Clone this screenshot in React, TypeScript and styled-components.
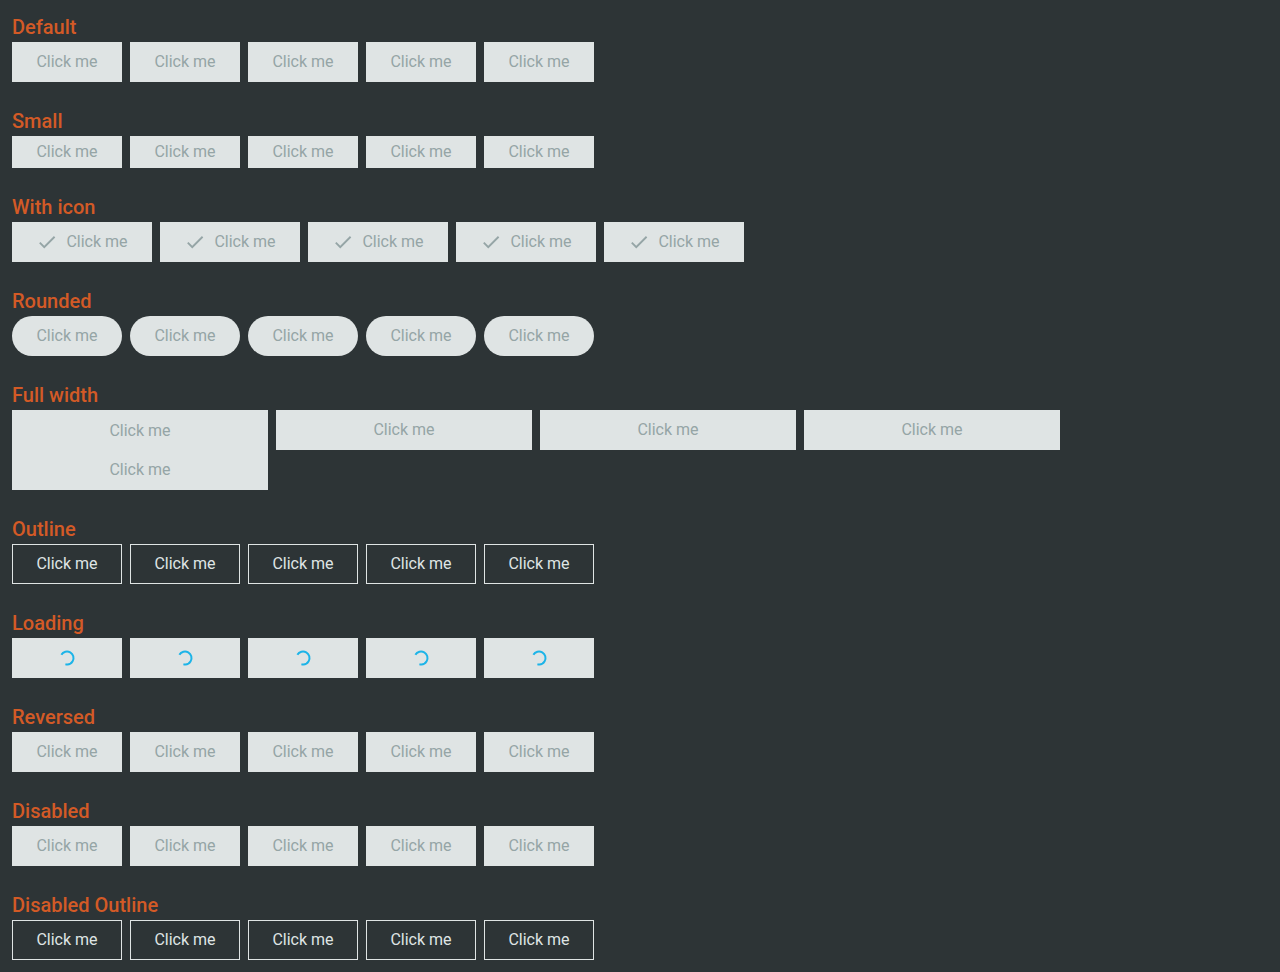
import React from "react";
import styled, { createGlobalStyle, css } from "styled-components";

const Global = createGlobalStyle`
  html, body { margin: 0; padding: 0; background: #2d3436; }
  body { font-family: Roboto, "Liberation Sans", sans-serif; }
`;

const Page = styled.div`
  padding: 15px 12px 12px;
  display: flex;
  flex-direction: column;
  gap: 27px;
`;

const Section = styled.section`
  display: flex;
  flex-direction: column;
  gap: 3px;
`;

const Heading = styled.h3`
  margin: 0;
  font-size: 20px;
  line-height: 24px;
  font-weight: 500;
  color: #d35a26;
`;

const Row = styled.div`
  display: flex;
  align-items: flex-start;
  gap: 8px;
`;

type BtnProps = {
  $small?: boolean;
  $rounded?: boolean;
  $outline?: boolean;
  $w?: number;
};

const Button = styled.button<BtnProps>`
  box-sizing: border-box;
  width: ${(p) => p.$w ?? 110}px;
  height: ${(p) => (p.$small ? 32 : 40)}px;
  padding: 0 0 1px;
  margin: 0;
  border: 1px solid transparent;
  background: #dfe4e4;
  color: #95a5a6;
  font-family: Roboto, "Liberation Sans", sans-serif;
  font-size: 16px;
  font-weight: 400;
  display: flex;
  align-items: center;
  justify-content: center;
  gap: 8px;
  cursor: pointer;
  border-radius: ${(p) => (p.$rounded ? "20px" : "0")};
  ${(p) =>
    p.$outline &&
    css`
      background: transparent;
      border-color: #dfe4e4;
      color: #dfe4e4;
    `}
`;

const TallButton = styled(Button)`
  height: 80px;
  padding: 0;
  flex-direction: column;
  gap: 0;
`;

const Line = styled.span`
  display: flex;
  align-items: center;
  justify-content: center;
  height: 39px;
  padding-bottom: 1px;
`;

const CheckIcon = () => (
  <svg width="22" height="22" viewBox="0 0 24 24" aria-hidden="true">
    <path d="M9 16.17L4.83 12l-1.42 1.41L9 19 21 7l-1.41-1.41z" fill="#95a5a6" />
  </svg>
);

const Spinner = () => (
  <svg width="18" height="18" viewBox="0 0 18 18" aria-hidden="true">
    <circle
      cx="9"
      cy="9"
      r="6.5"
      fill="none"
      stroke="#1cb4e8"
      strokeWidth="2"
      strokeDasharray="28 13"
      transform="rotate(-150 9 9)"
    />
  </svg>
);

const five = [0, 1, 2, 3, 4];

const BasicRow = (props: BtnProps & { disabled?: boolean }) => (
  <Row>
    {five.map((i) => (
      <Button key={i} {...props}>
        Click me
      </Button>
    ))}
  </Row>
);

export default function App() {
  return (
    <>
      <Global />
      <Page>
        <Section>
          <Heading>Default</Heading>
          <BasicRow />
        </Section>
        <Section>
          <Heading>Small</Heading>
          <BasicRow $small />
        </Section>
        <Section>
          <Heading>With icon</Heading>
          <Row>
            {five.map((i) => (
              <Button key={i} $w={140}>
                <CheckIcon />
                Click me
              </Button>
            ))}
          </Row>
        </Section>
        <Section>
          <Heading>Rounded</Heading>
          <BasicRow $rounded />
        </Section>
        <Section>
          <Heading>Full width</Heading>
          <Row>
            <TallButton $w={256}>
              <Line>Click me</Line>
              <Line>Click me</Line>
            </TallButton>
            {[0, 1, 2].map((i) => (
              <Button key={i} $w={256}>
                Click me
              </Button>
            ))}
          </Row>
        </Section>
        <Section>
          <Heading>Outline</Heading>
          <BasicRow $outline />
        </Section>
        <Section>
          <Heading>Loading</Heading>
          <Row>
            {five.map((i) => (
              <Button key={i} aria-label="Loading">
                <Spinner />
              </Button>
            ))}
          </Row>
        </Section>
        <Section>
          <Heading>Reversed</Heading>
          <BasicRow />
        </Section>
        <Section>
          <Heading>Disabled</Heading>
          <BasicRow disabled />
        </Section>
        <Section>
          <Heading>Disabled Outline</Heading>
          <BasicRow $outline disabled />
        </Section>
      </Page>
    </>
  );
}
